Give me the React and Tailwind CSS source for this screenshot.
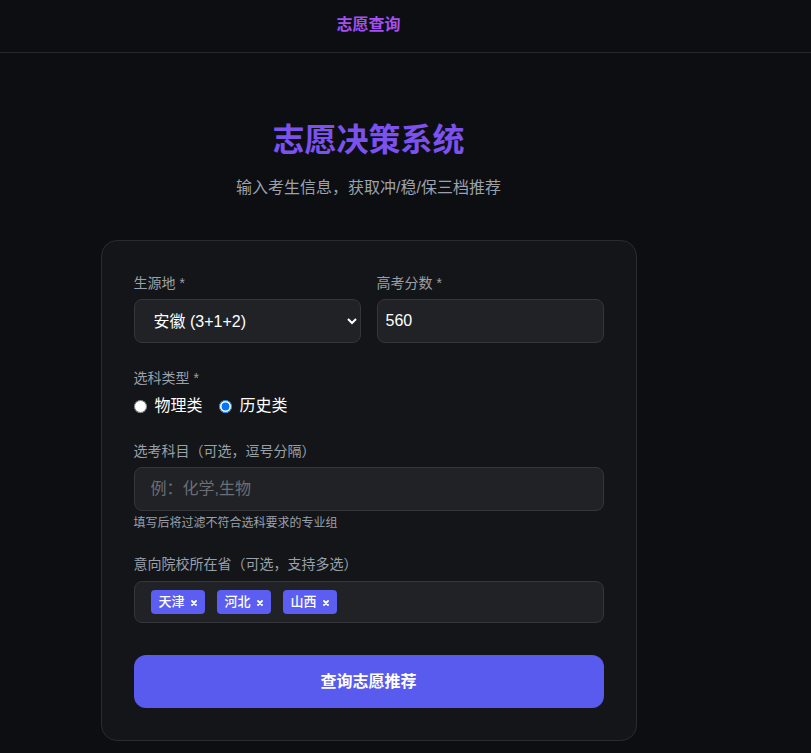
import React from 'react'

const font = { fontFamily: '"Liberation Sans", "Noto Sans CJK SC", sans-serif' }

const Tag = ({ label }) => (
  <span className="inline-flex items-center gap-1.5 h-6 pl-2 pr-2 rounded bg-[#5b5ef0] text-white text-[13px] font-medium">
    {label}
    <svg width="6" height="6" viewBox="0 0 6 6" className="mt-0.5">
      <path d="M1 1L5 5M5 1L1 5" stroke="white" strokeWidth="1.8" strokeLinecap="round" />
    </svg>
  </span>
)

export default function App() {
  const [type, setType] = React.useState('history')

  return (
    <div className="min-h-[753px] bg-[#0d0e12] text-white" style={font}>
      <header className="h-[53px] border-b border-[#26272c]">
        <div className="w-[737px] h-[50px] flex items-center justify-center">
          <span className="text-base font-bold text-[#a550f2]">志愿查询</span>
        </div>
      </header>

      <div className="w-[737px] flex flex-col items-center">
        <h1 className="mt-[67px] text-[32px] leading-[40px] font-bold text-[#7b52ee]">志愿决策系统</h1>
        <p className="mt-[18px] text-base leading-[20px] text-[#9ba1ad]">输入考生信息，获取冲/稳/保三档推荐</p>

        <div className="mt-[42px] w-[536px] rounded-2xl border border-[#2a2b30] bg-[#141518] p-8">
          <div className="grid grid-cols-2 gap-4">
            <div>
              <label className="block text-sm leading-5 text-[#9aa0aa] mb-1.5">生源地 *</label>
              <select className="w-full h-[44px] rounded-lg border border-[#35363c] bg-[#212226] pl-[15px] pr-2 text-base text-white outline-none" defaultValue="ah">
                <option value="ah">安徽 (3+1+2)</option>
              </select>
            </div>
            <div>
              <label className="block text-sm leading-5 text-[#9aa0aa] mb-1.5">高考分数 *</label>
              <input className="w-full h-[44px] rounded-lg border border-[#35363c] bg-[#212226] px-2 text-base text-white outline-none" defaultValue="560" />
            </div>
          </div>

          <div className="mt-[25px]">
            <label className="block text-sm leading-5 text-[#9aa0aa]">选科类型 *</label>
            <div className="mt-2 flex items-center gap-4 h-5">
              <label className="flex items-center gap-2 text-base">
                <input type="radio" name="t" checked={type === 'physics'} onChange={() => setType('physics')} className="m-0 w-[13px] h-[13px]" />
                物理类
              </label>
              <label className="flex items-center gap-2 text-base">
                <input type="radio" name="t" checked={type === 'history'} onChange={() => setType('history')} className="m-0 w-[13px] h-[13px]" />
                历史类
              </label>
            </div>
          </div>

          <div className="mt-[25px]">
            <label className="block text-sm leading-5 text-[#9aa0aa] mb-1.5">选考科目（可选，逗号分隔）</label>
            <input className="w-full h-[44px] rounded-lg border border-[#35363c] bg-[#212226] px-4 text-base text-white placeholder-[#6b6e76] outline-none" placeholder="例：化学,生物" />
            <p className="mt-1 text-xs leading-4 text-[#9aa0aa]">填写后将过滤不符合选科要求的专业组</p>
          </div>

          <div className="mt-[23px]">
            <label className="block text-sm leading-5 text-[#9aa0aa] mb-[7px]">意向院校所在省（可选，支持多选）</label>
            <div className="h-[42px] rounded-lg border border-[#35363c] bg-[#212226] px-4 flex items-center gap-3">
              <Tag label="天津" />
              <Tag label="河北" />
              <Tag label="山西" />
            </div>
          </div>

          <button className="mt-8 w-full h-[53px] rounded-xl bg-[#585bee] text-white text-base font-semibold">
            查询志愿推荐
          </button>
        </div>
      </div>
    </div>
  )
}
